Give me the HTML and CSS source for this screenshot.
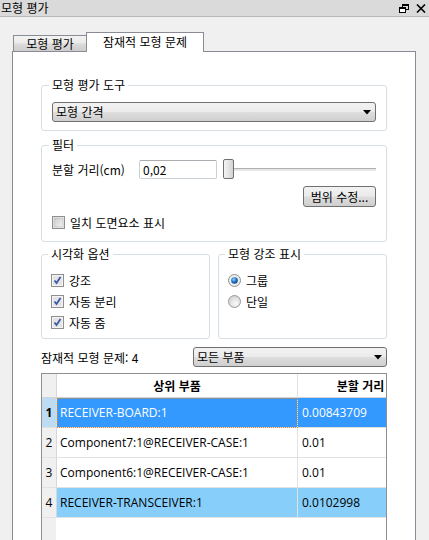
FILE: index.html
```html
<!DOCTYPE html>
<html lang="ko">
<head>
  <meta charset="UTF-8" />
  <meta name="viewport" content="width=device-width, initial-scale=1.0"/>
  <title>모형 평가</title>
  <link rel="stylesheet" href="styles.css">
</head>
<body>
  <div class="titlebar">
    <span class="title">모형 평가</span>
    <span class="win-btns">
      <svg width="10" height="9" viewBox="0 0 10 9">
        <rect x="3.5" y="0.5" width="6" height="5" fill="none" stroke="#000"/>
        <rect x="3" y="0" width="7" height="2" fill="#000"/>
        <rect x="0.5" y="3.5" width="6" height="5" fill="#fff" stroke="#000"/>
        <rect x="0" y="3" width="7" height="2" fill="#000"/>
      </svg>
      <svg width="10" height="9" viewBox="0 0 10 9">
        <path d="M1 0.5 L9 8.5 M9 0.5 L1 8.5" stroke="#000" stroke-width="1.6"/>
      </svg>
    </span>
  </div>

  <div class="tabs">
    <div class="tab">모형 평가</div>
    <div class="tab active">잠재적 모형 문제</div>
  </div>

  <div class="panel">
    <fieldset class="group tool">
      <legend>모형 평가 도구</legend>
      <div class="combo">
        <span>모형 간격</span>
        <svg width="8" height="5" viewBox="0 0 8 5"><path d="M0 0 H8 L4 4.5 Z" fill="#000"/></svg>
      </div>
    </fieldset>

    <fieldset class="group filter">
      <legend>필터</legend>
      <div class="dist-row">
        <label class="dist-label">분할 거리(cm)</label>
        <div class="textbox">0,02</div>
        <div class="slider">
          <div class="thumb"></div>
          <div class="track"></div>
        </div>
      </div>
      <div class="btn-row">
        <button class="btn">범위 수정...</button>
      </div>
      <div class="check first">
        <svg class="box" width="13" height="13" viewBox="0 0 13 13">
          <defs>
            <linearGradient id="ub" x1="0" y1="0" x2="1" y2="1">
              <stop offset="0" stop-color="#cbcbcb"/>
              <stop offset="1" stop-color="#f4f4f4"/>
            </linearGradient>
          </defs>
          <rect x="0.5" y="0.5" width="12" height="12" fill="#f4f4f4" stroke="#8f8f8f"/>
          <rect x="2" y="2" width="9" height="9" fill="url(#ub)" stroke="#aeaeae" stroke-width="0.6"/>
        </svg>
        <span>일치 도면요소 표시</span>
      </div>
    </fieldset>

    <div class="group-row">
      <fieldset class="group opts">
        <legend>시각화 옵션</legend>
        <div class="check">
          <svg class="box" width="13" height="13" viewBox="0 0 13 13">
            <rect x="0.5" y="0.5" width="12" height="12" fill="#f4f4f4" stroke="#8f8f8f"/>
            <rect x="2" y="2" width="9" height="9" fill="#e4e4e4"/>
            <path d="M3.5 6.5 L5.5 9 L9.5 3" fill="none" stroke="#3c59a8" stroke-width="1.8"/>
          </svg>
          <span>강조</span>
        </div>
        <div class="check">
          <svg class="box" width="13" height="13" viewBox="0 0 13 13">
            <rect x="0.5" y="0.5" width="12" height="12" fill="#f4f4f4" stroke="#8f8f8f"/>
            <rect x="2" y="2" width="9" height="9" fill="#e4e4e4"/>
            <path d="M3.5 6.5 L5.5 9 L9.5 3" fill="none" stroke="#3c59a8" stroke-width="1.8"/>
          </svg>
          <span>자동 분리</span>
        </div>
        <div class="check">
          <svg class="box" width="13" height="13" viewBox="0 0 13 13">
            <rect x="0.5" y="0.5" width="12" height="12" fill="#f4f4f4" stroke="#8f8f8f"/>
            <rect x="2" y="2" width="9" height="9" fill="#e4e4e4"/>
            <path d="M3.5 6.5 L5.5 9 L9.5 3" fill="none" stroke="#3c59a8" stroke-width="1.8"/>
          </svg>
          <span>자동 줌</span>
        </div>
      </fieldset>

      <fieldset class="group opts">
        <legend>모형 강조 표시</legend>
        <div class="check">
          <svg class="box" width="13" height="13" viewBox="0 0 13 13">
            <defs>
              <radialGradient id="rsel" cx="0.4" cy="0.35" r="0.6">
                <stop offset="0" stop-color="#9ad6ff"/>
                <stop offset="0.6" stop-color="#1f78c8"/>
                <stop offset="1" stop-color="#0d4f94"/>
              </radialGradient>
            </defs>
            <circle cx="6.5" cy="6.5" r="6" fill="#eeeeee" stroke="#8f8f8f"/>
            <circle cx="6.5" cy="6.5" r="3.3" fill="url(#rsel)"/>
          </svg>
          <span>그룹</span>
        </div>
        <div class="check">
          <svg class="box" width="13" height="13" viewBox="0 0 13 13">
            <defs>
              <radialGradient id="roff" cx="0.6" cy="0.65" r="0.7">
                <stop offset="0" stop-color="#fafafa"/>
                <stop offset="1" stop-color="#cfcfcf"/>
              </radialGradient>
            </defs>
            <circle cx="6.5" cy="6.5" r="6" fill="url(#roff)" stroke="#9a9a9a"/>
          </svg>
          <span>단일</span>
        </div>
      </fieldset>
    </div>

    <div class="count-row">
      <span>잠재적 모형 문제: 4</span>
      <div class="combo small">
        <span>모든 부품</span>
        <svg width="8" height="5" viewBox="0 0 8 5"><path d="M0 0 H8 L4 4.5 Z" fill="#000"/></svg>
      </div>
    </div>

    <div class="grid-wrap">
      <table class="grid">
        <colgroup>
          <col class="c-num">
          <col class="c-part">
          <col class="c-dist">
        </colgroup>
        <thead>
          <tr>
            <th class="num"></th>
            <th>상위 부품</th>
            <th>분할 거리</th>
          </tr>
        </thead>
        <tbody>
          <tr class="selected">
            <td class="num">1</td>
            <td class="focus">RECEIVER-BOARD:1</td>
            <td>0.00843709</td>
          </tr>
          <tr>
            <td class="num">2</td>
            <td>Component7:1@RECEIVER-CASE:1</td>
            <td>0.01</td>
          </tr>
          <tr>
            <td class="num">3</td>
            <td>Component6:1@RECEIVER-CASE:1</td>
            <td>0.01</td>
          </tr>
          <tr class="marked">
            <td class="num">4</td>
            <td>RECEIVER-TRANSCEIVER:1</td>
            <td>0.0102998</td>
          </tr>
        </tbody>
      </table>
    </div>
  </div>
</body>
</html>
```

FILE: styles.css
```css
body {
  margin: 0;
  width: 429px;
  height: 540px;
  overflow: hidden;
  background: #f0f0f0;
  font-family: "Noto Sans CJK KR", "Noto Sans", sans-serif;
  font-size: 12px;
  color: #000;
}
.titlebar {
  height: 16px;
  line-height: 16px;
  background: #dadada;
  border-bottom: 1px solid #b8b8b8;
  display: flex;
  align-items: center;
  justify-content: space-between;
  padding-left: 1px;
}
.win-btns {
  display: flex;
  gap: 7px;
  padding-right: 3px;
}
.tabs {
  display: flex;
  align-items: flex-end;
  height: 19px;
  margin-top: 15px;
  padding-left: 13px;
}
.tab {
  box-sizing: border-box;
  width: 73px;
  height: 16px;
  line-height: 15px;
  text-align: center;
  border: 1px solid #898c95;
  border-bottom: none;
  border-right: none;
  background: linear-gradient(#f3f3f3, #ebebeb 45%, #dcdcdc 52%, #cdcdcd);
}
.tab.active {
  width: 118px;
  height: 20px;
  line-height: 18px;
  background: #fff;
  border-right: 1px solid #898c95;
  margin-bottom: -1px;
  position: relative;
  z-index: 1;
}
.panel {
  box-sizing: border-box;
  width: 404px;
  height: 489px;
  overflow: hidden;
  margin-left: 12px;
  padding: 26px 28px 0;
  background: #fff;
  border: 1px solid #898c95;
  border-bottom: none;
}
.group {
  margin: 0;
  min-width: 0;
  border: 1px solid #d5dfe5;
  border-radius: 3px;
  padding: 10px 10px 8px;
}
.group legend {
  padding: 0 3px;
  margin-left: -3px;
  line-height: 14px;
}
.combo {
  box-sizing: border-box;
  height: 20px;
  display: flex;
  align-items: center;
  justify-content: space-between;
  padding: 0 4px 0 3px;
  border: 1px solid #707070;
  border-radius: 3px;
  background: linear-gradient(#f2f2f2, #ebebeb 48%, #dddddd 52%, #cfcfcf);
  line-height: 18px;
}
.combo.small {
  width: 194px;
}
.filter {
  margin-top: 7px;
  padding: 7px 10px 12px;
}
.dist-row {
  display: flex;
  align-items: center;
  height: 20px;
}
.dist-label {
  width: 87px;
}
.textbox {
  box-sizing: border-box;
  width: 78px;
  height: 19px;
  line-height: 17px;
  padding-left: 3px;
  border: 1px solid #c9d0d8;
  border-top-color: #abadb3;
  border-radius: 2px;
}
.slider {
  flex: 1;
  display: flex;
  align-items: center;
  margin-left: 6px;
}
.thumb {
  box-sizing: border-box;
  width: 11px;
  height: 20px;
  border: 1px solid #707070;
  border-radius: 2px;
  background: linear-gradient(to right, #f4f4f4, #e4e4e4 50%, #d2d2d2);
}
.track {
  flex: 1;
  height: 2px;
  border-top: 1px solid #b0b0b0;
  background: #e7e7e7;
}
.btn-row {
  display: flex;
  justify-content: flex-end;
  margin-top: 7px;
}
.btn {
  box-sizing: border-box;
  width: 73px;
  height: 21px;
  padding: 0;
  font: inherit;
  line-height: 19px;
  border: 1px solid #707070;
  border-radius: 3px;
  background: linear-gradient(#f2f2f2, #ebebeb 48%, #dddddd 52%, #cfcfcf);
}
.check {
  display: flex;
  align-items: center;
  gap: 5px;
  height: 13px;
  line-height: 13px;
  margin-top: 8px;
}
.check:first-of-type {
  margin-top: 0;
}
.check.first {
  margin-top: 9px;
}
.box {
  flex: none;
}
.group-row {
  display: flex;
  gap: 8px;
  margin-top: 5px;
}
.opts {
  flex: 1;
  padding: 13px 9px 9px;
}
.count-row {
  display: flex;
  align-items: center;
  justify-content: space-between;
  margin-top: 8px;
}
.grid-wrap {
  margin-top: 6px;
  height: 170px;
  overflow: hidden;
  border: 1px solid #8e8f8f;
  background: linear-gradient(to right, #f0f0f0 14px, #fff 14px);
}
.grid {
  table-layout: fixed;
  width: 382px;
  border-collapse: separate;
  border-spacing: 0;
  font-family: "Segoe UI", "Open Sans", sans-serif;
  font-size: 12px;
}
.c-num { width: 15px; }
.c-part { width: 241px; }
.c-dist { width: 126px; }
.grid th {
  height: 23px;
  padding: 0;
  font-family: "Noto Sans CJK KR", sans-serif;
  font-size: 12px;
  font-weight: bold;
  text-align: center;
  background: #fff;
  border-right: 1px solid #e2e2e2;
  border-bottom: 1px solid #d5d5d5;
  white-space: nowrap;
}
.grid td {
  height: 29px;
  padding: 0 0 0 3px;
  border-right: 1px solid #e2e2e2;
  border-bottom: 1px solid #e2e2e2;
  white-space: nowrap;
  overflow: hidden;
}
.grid td:last-child {
  padding-left: 4px;
}
.grid .num {
  padding: 0;
  text-align: center;
  background: #f0f0f0;
  border-right: 1px solid #d8d8d8;
}
.selected td {
  background: #3399ff;
  color: #fff;
}
.selected td.num {
  background: #bddcf4;
  color: #000;
  font-weight: bold;
}
.selected td.focus {
  outline: 1px dotted #d08a3a;
  outline-offset: -1px;
}
.marked td {
  background: #87cefa;
}
.marked td.num {
  background: #f0f0f0;
}
```
